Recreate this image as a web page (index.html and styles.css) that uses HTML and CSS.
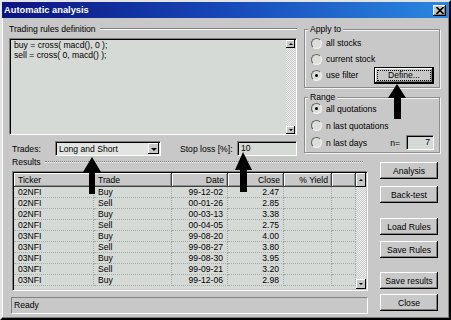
FILE: index.html
```html
<!DOCTYPE html>
<html lang="en">
<head>
  <meta charset="UTF-8">
  <title>Automatic analysis</title>
  <link rel="stylesheet" href="styles.css">
</head>
<body>
<div class="window">
  <div class="titlebar">
    <span class="title">Automatic analysis</span>
    <span class="close-x">
      <svg width="8" height="7" viewBox="0 0 8 7"><path d="M0.5 0 L7.5 7 M7.5 0 L0.5 7" stroke="#000" stroke-width="1.6"/></svg>
    </span>
  </div>

  <div class="top">
    <div class="rules">
      <div class="sep-label"><span>Trading rules definition</span></div>
      <div class="editor">
        <div class="code">buy = cross( macd(), 0 );
sell = cross( 0, macd() );</div>
        <div class="vscroll small">
          <span class="sbtn up"></span>
          <span class="track"></span>
          <span class="sbtn down"></span>
        </div>
      </div>
      <div class="trades-row">
        <span class="trades-label">Trades:</span>
        <div class="combo">
          <span class="combo-text">Long and Short</span>
          <span class="combo-drop"></span>
        </div>
        <span class="stop-label">Stop loss [%]:</span>
        <div class="field stop-field">10</div>
      </div>
    </div>

    <div class="options">
      <div class="group apply">
        <span class="group-title">Apply to</span>
        <div class="opt"><span class="radio"></span>all stocks</div>
        <div class="opt"><span class="radio"></span>current stock</div>
        <div class="opt"><span class="radio on"></span>use filter
          <button class="btn default define"><span class="focus">Define...</span></button>
        </div>
      </div>
      <div class="group range">
        <span class="group-title">Range</span>
        <div class="opt"><span class="radio on"></span>all quotations</div>
        <div class="opt"><span class="radio"></span>n last quotations</div>
        <div class="opt"><span class="radio"></span>n last days
          <span class="n-label">n=</span>
          <div class="field n-field">7</div>
        </div>
      </div>
    </div>
  </div>

  <div class="bottom">
    <div class="results">
      <div class="sep-label dotted"><span>Results</span></div>
      <div class="listview">
        <div class="table-wrap">
          <table class="trades">
            <colgroup>
              <col style="width:80px"><col style="width:78px"><col style="width:56px">
              <col style="width:56px"><col style="width:48px"><col style="width:24px">
            </colgroup>
            <thead>
              <tr><th>Ticker</th><th>Trade</th><th class="num">Date</th><th class="num">Close</th><th class="num">% Yield</th><th></th></tr>
            </thead>
            <tbody>
              <tr><td>02NFI</td><td>Buy</td><td class="num">99-12-02</td><td class="num">2.47</td><td></td><td></td></tr>
              <tr><td>02NFI</td><td>Sell</td><td class="num">00-01-26</td><td class="num">2.85</td><td></td><td></td></tr>
              <tr><td>02NFI</td><td>Buy</td><td class="num">00-03-13</td><td class="num">3.38</td><td></td><td></td></tr>
              <tr><td>02NFI</td><td>Sell</td><td class="num">00-04-05</td><td class="num">2.75</td><td></td><td></td></tr>
              <tr><td>03NFI</td><td>Buy</td><td class="num">99-08-20</td><td class="num">4.00</td><td></td><td></td></tr>
              <tr><td>03NFI</td><td>Sell</td><td class="num">99-08-27</td><td class="num">3.80</td><td></td><td></td></tr>
              <tr><td>03NFI</td><td>Buy</td><td class="num">99-08-30</td><td class="num">3.95</td><td></td><td></td></tr>
              <tr><td>03NFI</td><td>Sell</td><td class="num">99-09-21</td><td class="num">3.20</td><td></td><td></td></tr>
              <tr><td>03NFI</td><td>Buy</td><td class="num">99-12-06</td><td class="num">2.98</td><td></td><td></td></tr>
            </tbody>
          </table>
        </div>
        <div class="vscroll list">
          <span class="sbtn up tall"></span>
          <span class="track"></span>
          <span class="sbtn down"></span>
        </div>
      </div>
    </div>

    <div class="buttons">
      <button class="btn">Analysis</button>
      <button class="btn back">Back-test</button>
      <button class="btn load">Load Rules</button>
      <button class="btn save">Save Rules</button>
      <button class="btn results-btn">Save results</button>
    </div>
  </div>

  <div class="status-row">
    <div class="status">Ready</div>
    <button class="btn">Close</button>
  </div>

  <svg class="arrows" width="451" height="320" viewBox="0 0 451 320">
    <polygon points="397,84 406,98 401,98 401,119 394,119 394,98 388,98"/>
    <polygon points="92,157 101,172 95,172 95,194 89,194 89,172 83,172"/>
    <polygon points="243,152 252,170 247,170 247,192 240,192 240,170 235,170"/>
  </svg>
</div>
</body>
</html>
```

FILE: styles.css
```css
body {
  margin: 0;
  background: #c8c8c8;
  font-family: "Liberation Sans", Arial, sans-serif;
  font-size: 8.6px;
  color: #000;
}

.window {
  position: relative;
  width: 451px;
  height: 320px;
  box-sizing: border-box;
  border: 2px solid;
  border-color: #e4e4e4 #000 #000 #e4e4e4;
  box-shadow: inset -1px -1px #808080, inset 1px 1px #fff;
  background: #c8c8c8;
}

/* title bar */
.titlebar {
  height: 16px;
  display: flex;
  align-items: center;
  justify-content: space-between;
  padding: 0 3px 0 2px;
  background: linear-gradient(90deg, #0a1480 0%, #1848b8 50%, #2a88e0 100%);
}

.title {
  color: #fff;
  font-weight: bold;
  font-size: 9.3px;
}

.close-x {
  width: 13px;
  height: 11px;
  display: flex;
  align-items: center;
  justify-content: center;
  background: #c8c8c8;
  box-shadow: inset -1px -1px #000, inset 1px 1px #fff, inset -2px -2px #808080;
}

/* shared bits */
.sep-label {
  display: flex;
  align-items: center;
  gap: 4px;
  height: 12px;
  line-height: 12px;
}

.sep-label::after {
  content: "";
  flex: 1;
  border-top: 1px solid #808080;
  border-bottom: 1px solid #fff;
}

.sep-label.dotted::after {
  border-top: 1px dotted #808080;
  border-bottom: 1px dotted #f4f4f4;
  margin-right: 5px;
}

.field {
  box-sizing: border-box;
  background: #d6dad6;
  border: 1px solid;
  border-color: #808080 #fff #fff #808080;
  box-shadow: inset 1px 1px #000;
}

.btn {
  box-sizing: border-box;
  height: 17px;
  width: 58px;
  padding: 0;
  border: none;
  background: #c8c8c8;
  font-family: inherit;
  font-size: 8.6px;
  color: #000;
  box-shadow: inset -1px -1px #000, inset 1px 1px #fff, inset -2px -2px #808080;
}

.btn.default {
  border: 1px solid #000;
  display: flex;
  align-items: center;
  justify-content: center;
}

.btn .focus {
  flex: 1;
  margin: 0 2px;
  border: 1px dotted #000;
  line-height: 9px;
}

/* top area */
.top {
  display: grid;
  grid-template-columns: 288px 136px;
  column-gap: 7px;
  padding: 5px 0 0 7px;
}

.editor {
  margin-top: 3px;
  height: 97px;
  box-sizing: border-box;
  display: flex;
  border: 1px solid;
  border-color: #808080 #fff #fff #808080;
  box-shadow: inset 1px 1px #000;
  padding: 1px 1px 0 1px;
  background: #d6dad6;
}

.code {
  flex: 1;
  white-space: pre;
  line-height: 10px;
  padding: 0 3px;
}

.vscroll {
  display: flex;
  flex-direction: column;
  width: 9px;
}

.vscroll .track {
  flex: 1;
  background: repeating-conic-gradient(#f0f0f0 0 25%, #c8c8c8 0 50%) 0 0 / 2px 2px;
}

.sbtn {
  height: 8px;
  position: relative;
  background: #c8c8c8;
  box-shadow: inset -1px -1px #000, inset 1px 1px #fff;
}

.sbtn::after {
  content: "";
  position: absolute;
  left: 50%;
  top: 50%;
  margin: -1px 0 0 -2px;
  border-left: 2px solid transparent;
  border-right: 2px solid transparent;
}

.sbtn.up::after {
  border-bottom: 2px solid #000;
}

.sbtn.down::after {
  border-top: 2px solid #000;
}

.vscroll.list {
  width: 10px;
}

.vscroll.list .sbtn {
  height: 10px;
}

.vscroll.list .sbtn.tall {
  height: 14px;
}

.trades-row {
  margin-top: 6px;
  height: 15px;
  display: flex;
  align-items: center;
}

.trades-label {
  width: 43px;
  padding-left: 3px;
}

.combo {
  width: 106px;
  height: 15px;
  box-sizing: border-box;
  display: flex;
  background: #e2e4e2;
  border: 1px solid;
  border-color: #808080 #fff #fff #808080;
  box-shadow: inset 1px 1px #000;
  padding: 1px 1px 1px 2px;
}

.combo-text {
  flex: 1;
  line-height: 12px;
  padding-left: 1px;
}

.combo-drop {
  width: 11px;
  position: relative;
  background: #c8c8c8;
  box-shadow: inset -1px -1px #000, inset 1px 1px #fff;
}

.combo-drop::after {
  content: "";
  position: absolute;
  left: 3px;
  top: 5px;
  border-left: 3px solid transparent;
  border-right: 3px solid transparent;
  border-top: 3px solid #000;
}

.stop-label {
  width: 57px;
  margin-left: 19px;
}

.stop-field {
  width: 60px;
  height: 15px;
  line-height: 13px;
  padding-left: 3px;
}

/* option groups */
.options {
  display: flex;
  flex-direction: column;
}

.group {
  border: 1px solid #8c8c8c;
  box-shadow: 1px 1px 0 #f4f4f4, inset 1px 1px 0 #f4f4f4;
  padding: 0 5px 4px 6px;
}

.group.apply {
  margin-top: 6px;
}

.group.range {
  margin-top: 9px;
  padding-bottom: 1px;
}

.group-title {
  display: table;
  margin: -7px 0 0 -3px;
  padding: 0 2px;
  line-height: 12px;
  background: #c8c8c8;
}

.range .group-title {
  margin-bottom: -3px;
}

.opt {
  height: 16px;
  display: flex;
  align-items: center;
}

.range .opt {
  height: 17px;
}

.radio {
  position: relative;
  width: 9px;
  height: 9px;
  margin-right: 4px;
  border-radius: 50%;
  border: 1px solid;
  border-color: #606060 #f4f4f4 #f4f4f4 #606060;
  background: #dcdedc;
}

.radio.on::after {
  content: "";
  position: absolute;
  left: 3px;
  top: 3px;
  width: 3px;
  height: 3px;
  border-radius: 50%;
  background: #000;
}

.define {
  margin-left: auto;
  width: 60px;
}

.n-label {
  margin-left: auto;
  margin-right: 6px;
}

.n-field {
  width: 28px;
  height: 15px;
  line-height: 13px;
  text-align: right;
  padding-right: 3px;
}

/* results */
.bottom {
  display: grid;
  grid-template-columns: 356px 58px;
  column-gap: 12px;
  padding-left: 10px;
}

.listview {
  margin-top: 3px;
  height: 120px;
  box-sizing: border-box;
  display: flex;
  border: 1px solid;
  border-color: #808080 #fff #fff #808080;
  box-shadow: inset 1px 1px #000;
  padding: 1px 1px 1px 1px;
}

.table-wrap {
  flex: 1;
  background: #d6dad6;
  overflow: hidden;
}

.trades {
  border-collapse: separate;
  border-spacing: 0;
  table-layout: fixed;
  width: 342px;
}

.trades th {
  height: 14px;
  padding: 0 4px;
  font-weight: normal;
  text-align: left;
  background: #c8c8c8;
  box-shadow: inset -1px -1px #404040, inset 1px 1px #fff, inset -2px -2px #909090;
}

.trades td {
  padding: 0 4px;
  line-height: 10px;
  border-bottom: 1px dotted #a4a8a4;
  border-right: 1px dotted #a4a8a4;
  white-space: nowrap;
}

.trades .num {
  text-align: right;
}

.buttons {
  display: flex;
  flex-direction: column;
  padding-top: 6px;
}

.buttons .back {
  margin-top: 7px;
}

.buttons .load {
  margin-top: 15px;
}

.buttons .save {
  margin-top: 6px;
}

.buttons .results-btn {
  margin-top: 14px;
}

/* status */
.status-row {
  display: flex;
  align-items: flex-start;
  padding: 3px 0 0 9px;
}

.status {
  width: 357px;
  height: 17px;
  box-sizing: border-box;
  margin-top: 3px;
  margin-right: 12px;
  padding-left: 2px;
  line-height: 15px;
  border: 1px solid;
  border-color: #808080 #fff #fff #808080;
}

/* annotation arrows */
.arrows {
  position: absolute;
  left: -2px;
  top: -2px;
  pointer-events: none;
}

.arrows polygon {
  fill: #000;
}
```
